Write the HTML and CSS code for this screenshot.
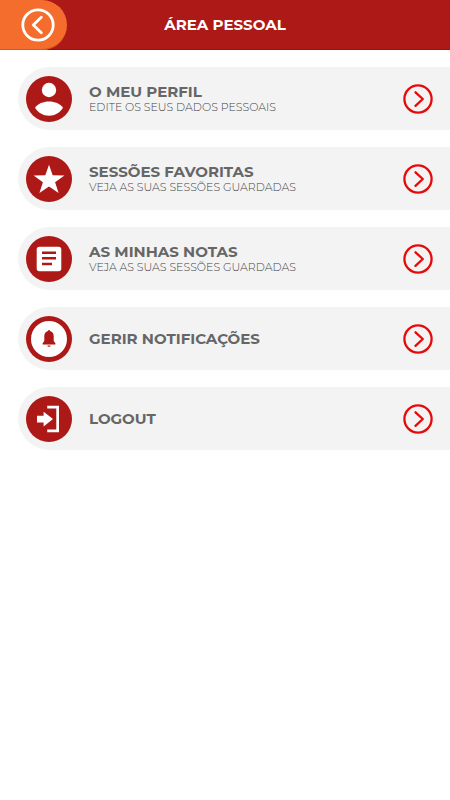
FILE: index.html
```html
<!DOCTYPE html>
<html lang="pt">
<head>
    <meta charset="UTF-8">
    <meta name="viewport" content="width=device-width, initial-scale=1">
    <title>Área Pessoal</title>
    <link rel="stylesheet" href="styles.css">
</head>
<body>
    <svg width="0" height="0" class="symbols" aria-hidden="true">
        <symbol id="arrow" viewBox="0 0 30 30">
            <circle cx="15" cy="15" r="13.6"/>
            <path d="M12.5 8.3L19.8 15L12.5 21.9"/>
        </symbol>
    </svg>

    <header class="header">
        <button class="back" type="button" aria-label="Voltar">
            <svg viewBox="0 0 34 34">
                <circle cx="17" cy="17" r="15.2"/>
                <path d="M20.3 9.3L12.3 17L20.3 24.7"/>
            </svg>
        </button>
        <h1>ÁREA PESSOAL</h1>
    </header>

    <nav class="menu">
        <a class="item" href="#perfil">
            <svg class="icon" viewBox="0 0 46 46">
                <circle class="disc" cx="23" cy="23" r="23"/>
                <circle cx="23" cy="14" r="7.2"/>
                <path d="M9 31.8C12 27.6 17 25.5 23 25.5S34 27.6 37 31.8C34 36.6 29 39.8 23 39.8S12 36.6 9 31.8Z"/>
            </svg>
            <span class="text">
                <span class="title">O MEU PERFIL</span>
                <span class="subtitle">EDITE OS SEUS DADOS PESSOAIS</span>
            </span>
            <svg class="arrow"><use href="#arrow"/></svg>
        </a>
        <a class="item" href="#favoritas">
            <svg class="icon" viewBox="0 0 46 46">
                <circle class="disc" cx="23" cy="23" r="23"/>
                <path d="M23 8.7L26.7 19.3L38.4 19.5L29.1 26.2L32.6 37L23 30.6L13.4 37L16.9 26.2L7.6 19.5L19.3 19.3Z"/>
            </svg>
            <span class="text">
                <span class="title">SESSÕES FAVORITAS</span>
                <span class="subtitle">VEJA AS SUAS SESSÕES GUARDADAS</span>
            </span>
            <svg class="arrow"><use href="#arrow"/></svg>
        </a>
        <a class="item" href="#notas">
            <svg class="icon" viewBox="0 0 46 46">
                <circle class="disc" cx="23" cy="23" r="23"/>
                <rect x="10.7" y="10.7" width="24.6" height="24.6" rx="2.8"/>
                <path class="disc" d="M16 15.5H30V18H16ZM16 21.1H30V23.6H16ZM16 26.7H26V29.2H16Z"/>
            </svg>
            <span class="text">
                <span class="title">AS MINHAS NOTAS</span>
                <span class="subtitle">VEJA AS SUAS SESSÕES GUARDADAS</span>
            </span>
            <svg class="arrow"><use href="#arrow"/></svg>
        </a>
        <a class="item" href="#notificacoes">
            <svg class="icon" viewBox="0 0 46 46">
                <circle class="disc" cx="23" cy="23" r="23"/>
                <circle cx="23" cy="23" r="18"/>
                <path class="disc" d="M22 15.1a1 1 0 0 1 2 0C26.4 15.7 27.7 17.7 27.7 20.1V25L29.4 27.2V28.6H16.6V27.2L18.3 25V20.1C18.3 17.7 19.6 15.7 22 15.1ZM21.3 29.5H24.7A1.7 1.3 0 0 1 21.3 29.5Z"/>
            </svg>
            <span class="text">
                <span class="title">GERIR NOTIFICAÇÕES</span>
            </span>
            <svg class="arrow"><use href="#arrow"/></svg>
        </a>
        <a class="item" href="#logout">
            <svg class="icon" viewBox="0 0 46 46">
                <circle class="disc" cx="23" cy="23" r="23"/>
                <path d="M11 19.8H17.6V15.8L27 23L17.6 30.4V26.4H11Z"/>
                <path d="M21.2 9.8H33V36.2H21.2V33.5H30.3V12.5H21.2Z"/>
            </svg>
            <span class="text">
                <span class="title">LOGOUT</span>
            </span>
            <svg class="arrow"><use href="#arrow"/></svg>
        </a>
    </nav>
</body>
</html>
```
FILE: styles.css
```css
* {
    box-sizing: border-box;
}

body {
    margin: 0;
    background-color: #fff;
    font-family: Montserrat, Inter, "Open Sans", sans-serif;
}

.symbols {
    display: none;
}

.header {
    display: grid;
    grid-template-columns: 67px 1fr 67px;
    align-items: center;
    height: 50px;
    background-color: #ad1917;
    box-shadow: inset 0 -1px #991210;
}

.header h1 {
    margin: 0;
    text-align: center;
    font-size: 15px;
    font-weight: 700;
    line-height: 20px;
    color: #fff;
}

.back {
    display: flex;
    align-items: center;
    justify-content: flex-end;
    height: 100%;
    padding: 0 12px 0 0;
    border: none;
    border-radius: 0 25px 25px 0;
    background-color: #f56d2d;
    box-shadow: inset 0 -1px #d9531b;
    cursor: pointer;
}

.back svg {
    width: 34px;
    height: 34px;
    fill: none;
    stroke: #fff;
    stroke-width: 2.8;
    stroke-linecap: round;
    stroke-linejoin: round;
}

.menu {
    display: flex;
    flex-direction: column;
    gap: 17px;
    padding: 17px 0 17px 18px;
}

.item {
    display: flex;
    align-items: center;
    gap: 17px;
    min-height: 63px;
    padding: 0 17px 0 8px;
    border-radius: 32px 0 0 32px;
    background-color: #f3f3f3;
    color: #666;
    text-decoration: none;
}

.icon {
    flex: none;
    width: 46px;
    height: 46px;
    fill: #fff;
}

.icon .disc {
    fill: #ad1917;
}

.text {
    flex: 1;
    display: flex;
    flex-direction: column;
}

.title {
    font-size: 15px;
    font-weight: 700;
    line-height: 17px;
}

.subtitle {
    font-size: 11px;
    font-weight: 300;
    line-height: 14px;
    color: #444;
}

.arrow {
    flex: none;
    width: 30px;
    height: 30px;
    fill: none;
    stroke: #e60a0a;
    stroke-width: 2.3;
    stroke-linecap: round;
    stroke-linejoin: round;
}
```
